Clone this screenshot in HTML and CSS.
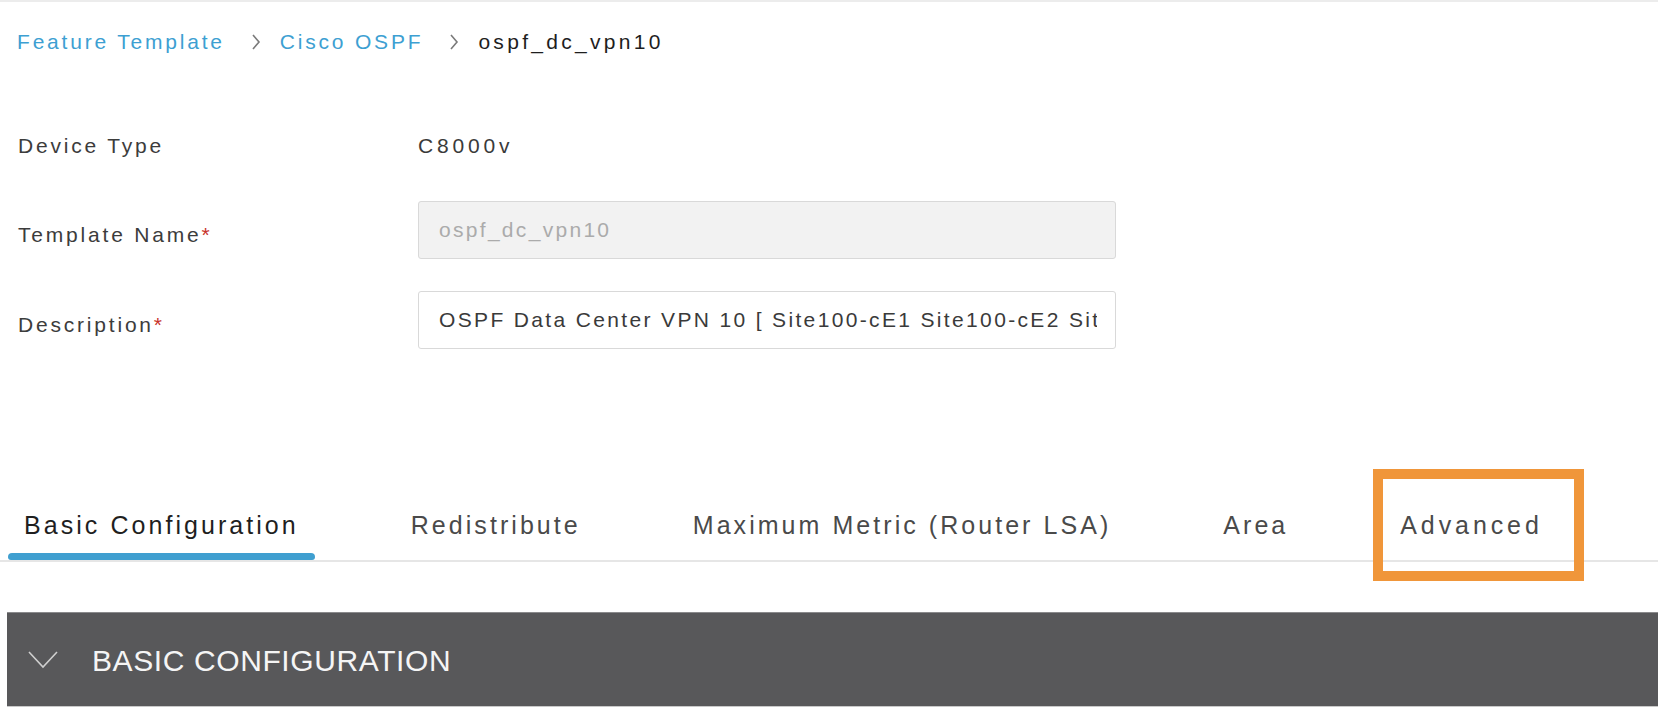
FILE: index.html
```html
<!DOCTYPE html>
<html lang="en">
<head>
<meta charset="utf-8">
<title>Cisco OSPF - ospf_dc_vpn10</title>
<link rel="stylesheet" href="styles.css">
</head>
<body>
<div class="topline"></div>
<nav class="crumbs">
  <a class="crumb-link">Feature Template</a>
  <svg class="crumb-sep" viewBox="0 0 10 16" width="10" height="16"><polyline points="2,1 8,8 2,15" fill="none" stroke="#7a7a7a" stroke-width="1.6"/></svg>
  <a class="crumb-link">Cisco OSPF</a>
  <svg class="crumb-sep" viewBox="0 0 10 16" width="10" height="16"><polyline points="2,1 8,8 2,15" fill="none" stroke="#7a7a7a" stroke-width="1.6"/></svg>
  <span class="crumb-current">ospf_dc_vpn10</span>
</nav>

<section class="form">
  <div class="row row-static">
    <div class="label">Device Type</div>
    <div class="value">C8000v</div>
  </div>
  <div class="row row-template">
    <div class="label label-input">Template Name<span class="req">*</span></div>
    <input class="field field-disabled" type="text" value="ospf_dc_vpn10" disabled>
  </div>
  <div class="row row-desc">
    <div class="label label-input">Description<span class="req">*</span></div>
    <input class="field" type="text" value="OSPF Data Center VPN 10 [ Site100-cE1 Site100-cE2 Site200-cE1 Site200-cE2 ]">
  </div>
</section>

<div class="tabs-wrap">
  <div class="tabs">
    <div class="tab active"><span class="tab-text">Basic Configuration</span><span class="tab-bar"></span></div>
    <div class="tab"><span class="tab-text">Redistribute</span><span class="tab-bar"></span></div>
    <div class="tab"><span class="tab-text">Maximum Metric (Router LSA)</span><span class="tab-bar"></span></div>
    <div class="tab"><span class="tab-text">Area</span><span class="tab-bar"></span></div>
    <div class="tab tab-wide"><span class="tab-text">Advanced</span><span class="tab-bar"></span></div>
  </div>
  <div class="highlight"></div>
</div>

<div class="section-head">
  <svg class="section-chevron" viewBox="0 0 30 18" width="30" height="18"><polyline points="1,1 15,16 29,1" fill="none" stroke="#cfcfcf" stroke-width="1.6"/></svg>
  <span class="section-title">BASIC CONFIGURATION</span>
</div>
</body>
</html>
```

FILE: styles.css
```css
* { box-sizing: border-box; }

html, body {
  margin: 0;
  padding: 0;
  background: #ffffff;
  overflow: hidden;
}

body {
  font-family: "Liberation Sans", Arial, sans-serif;
  color: #3c3c3c;
  width: 1658px;
  height: 720px;
}

.topline {
  height: 2px;
  background: #ececec;
}

/* Breadcrumb */
.crumbs {
  display: flex;
  align-items: center;
  gap: 24px;
  margin-top: 25px;
  padding-left: 17px;
  height: 30px;
  font-size: 21px;
  line-height: 30px;
  letter-spacing: 2.8px;
}

.crumb-link {
  color: #3d9fd2;
}

.crumb-current {
  color: #1e1e1e;
  letter-spacing: 3.3px;
}

.crumb-sep {
  display: block;
  margin: 0 -5px 0 2px;
}

/* Form */
.form {
  margin-top: 74px;
  padding-left: 18px;
}

.row {
  display: flex;
  align-items: flex-start;
}

.row-template { margin-top: 40px; }
.row-desc { margin-top: 32px; }

.label {
  width: 400px;
  flex: none;
  font-size: 21px;
  line-height: 30px;
  letter-spacing: 2.8px;
  color: #3c3c3c;
}

.label-input {
  padding-top: 19px;
}

.req {
  color: #c8322a;
  letter-spacing: 0;
}

.value {
  font-size: 21px;
  line-height: 30px;
  letter-spacing: 3.8px;
  color: #3a3a3a;
}

.row-static { height: 30px; }

.field {
  display: block;
  width: 698px;
  height: 58px;
  margin: 0;
  padding: 0 18px 0 20px;
  border: 1px solid #d9d9d9;
  border-radius: 3px;
  background: #ffffff;
  font-family: "Liberation Sans", Arial, sans-serif;
  font-size: 21px;
  letter-spacing: 2.35px;
  color: #3a3a3a;
  outline: none;
}

.field-disabled {
  background: #f2f2f2;
  color: #ababab;
  letter-spacing: 2.3px;
}

/* Tabs */
.tabs-wrap {
  position: relative;
  margin-top: 161px;
}

.tabs {
  display: flex;
  gap: 80px;
  padding-left: 8px;
  border-bottom: 2px solid #e6e6e6;
}

.tab {
  display: flex;
  flex-direction: column;
  align-items: stretch;
}

.tab-text {
  display: block;
  padding: 0 16px;
  font-size: 25px;
  line-height: 30px;
  letter-spacing: 3.05px;
  color: #4a4a4a;
  white-space: nowrap;
}

.tab-wide .tab-text {
  letter-spacing: 3.9px;
}

.tab.active .tab-text {
  color: #1f1f1f;
}

.tab-bar {
  display: block;
  height: 7px;
  margin-top: 13px;
  border-radius: 4px 4px 3px 3px;
  background: transparent;
}

.tab.active .tab-bar {
  background: #3f9fd0;
}

.highlight {
  position: absolute;
  left: 1373px;
  top: -41px;
  width: 211px;
  height: 112px;
  border: 10px solid #f0963a;
  pointer-events: none;
}

/* Section header */
.section-head {
  display: flex;
  align-items: center;
  gap: 34px;
  margin-top: 50px;
  margin-left: 7px;
  height: 95px;
  padding-left: 21px;
  background: #58585a;
  border-top: 1px solid #8a8a8c;
  border-bottom: 1px solid #c9c9c9;
}

.section-chevron {
  display: block;
  flex: none;
}

.section-title {
  font-size: 30px;
  line-height: 36px;
  padding-top: 3px;
  color: #f5f5f5;
  letter-spacing: 0.6px;
}
```
